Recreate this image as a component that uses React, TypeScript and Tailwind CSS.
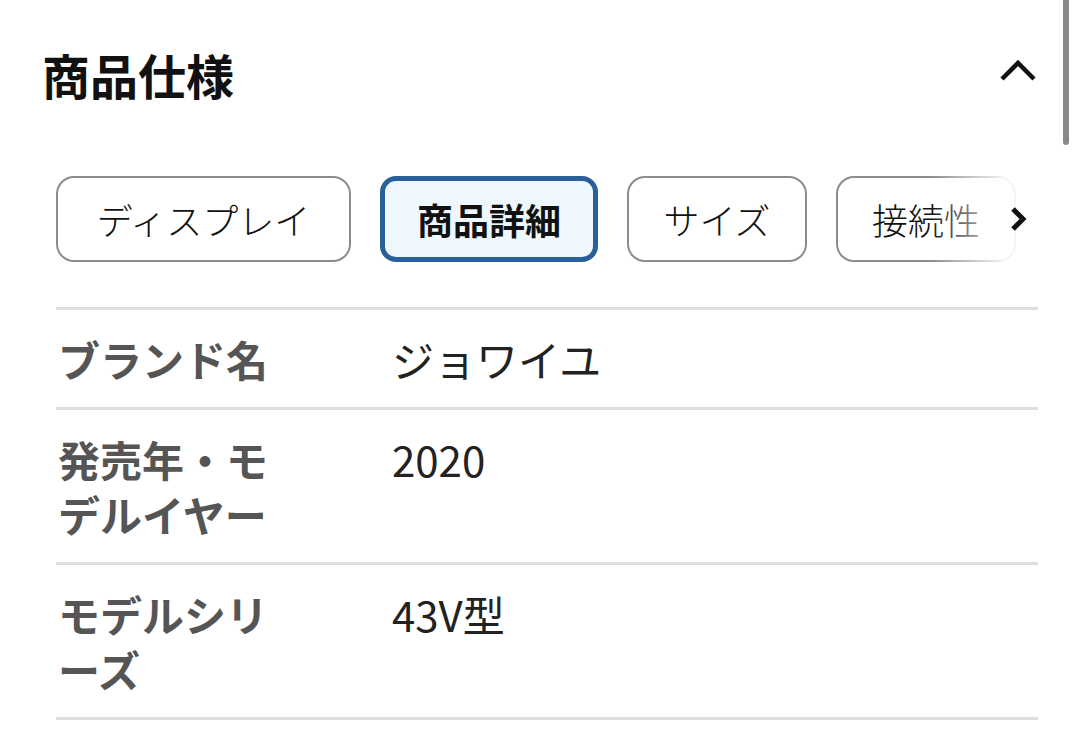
import React from 'react';

const tabs = [
  { label: 'ディスプレイ', active: false, w: 'w-[295px]' },
  { label: '商品詳細', active: true, w: 'w-[218px]' },
  { label: 'サイズ', active: false, w: 'w-[180px]' },
  { label: '接続性', active: false, w: 'w-[180px]' },
];

const rows = [
  { label: 'ブランド名', value: 'ジョワイユ' },
  { label: '発売年・モデルイヤー', value: '2020' },
  { label: 'モデルシリーズ', value: '43V型' },
];

const App: React.FC = () => {
  return (
    <div
      className="relative w-[1080px] h-[729px] overflow-hidden bg-white"
      style={{ fontFamily: '"Noto Sans CJK JP", "Noto Sans", sans-serif' }}
    >
      {/* scrollbar */}
      <div className="absolute right-[11px] -top-2 w-[6px] h-[153px] rounded-full bg-[#8a8a8a]" />

      <div className="flex items-start justify-between pl-[42px] pr-[42px] pt-[44px]">
        <h2 className="text-[48px] leading-[60px] font-bold text-[#111]">商品仕様</h2>
        <svg width="38" height="24" viewBox="0 0 38 24" className="mt-[14px] mr-[1px]">
          <path d="M3 21 L19 5 L35 21" fill="none" stroke="#111" strokeWidth="4.5" />
        </svg>
      </div>

      <div className="relative mt-[72px] ml-[56px] mr-[42px] flex gap-[29px]">
        {tabs.map((t) => (
          <div
            key={t.label}
            className={
              t.active
                ? `${t.w} h-[86px] shrink-0 flex items-center justify-center rounded-[16px] border-[5px] border-[#2a6099] bg-[#eef8fc] text-[36px] font-bold text-[#111]`
                : `${t.w} h-[86px] shrink-0 flex items-center justify-center rounded-[18px] border-2 border-[#8c8c8c] bg-white text-[36px] font-light text-[#111]`
            }
          >
            {t.label}
          </div>
        ))}
        <div className="absolute right-[-42px] top-0 h-[86px] w-[150px] bg-gradient-to-r from-white/0 via-white/90 via-50% to-white flex items-center">
          <svg width="18" height="26" viewBox="0 0 18 26" className="ml-[80px]">
            <path d="M3 3 L13 13 L3 23" fill="none" stroke="#111" strokeWidth="5" />
          </svg>
        </div>
      </div>

      <div className="mt-[45px] ml-[56px] mr-[42px] border-t-[3px] border-[#dedede]">
        {rows.map((r) => (
          <div key={r.label} className="flex py-[21px] border-b-[3px] border-[#dedede]">
            <div className="w-[230px] pl-[2px] text-[42px] leading-[55px] font-bold text-[#555]">
              {r.label}
            </div>
            <div className="ml-[106px] text-[42px] leading-[55px] text-[#222]">{r.value}</div>
          </div>
        ))}
      </div>
    </div>
  );
};

export default App;
